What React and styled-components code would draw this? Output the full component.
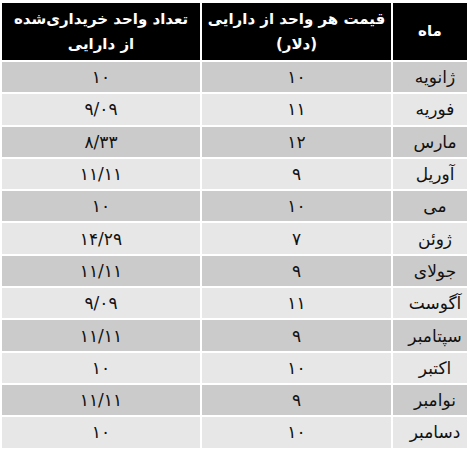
import React from "react";
import styled, { createGlobalStyle } from "styled-components";

const GlobalStyle = createGlobalStyle`
  html, body {
    margin: 0;
    padding: 0;
    background: #ffffff;
  }
  body {
    font-family: "DejaVu Sans", "Noto Sans", sans-serif;
  }
`;

const Page = styled.div`
  width: 470px;
  height: 460px;
  padding-top: 1px;
  box-sizing: border-box;
  background: #ffffff;
`;

const Table = styled.table`
  direction: rtl;
  border-collapse: separate;
  border-spacing: 2px;
  table-layout: fixed;
  width: 469px;
`;

const HeadCell = styled.th`
  background: #000000;
  color: #ffffff;
  font-weight: bold;
  font-size: 15px;
  line-height: 25px;
  height: 57px;
  padding: 0;
  text-align: center;
  vertical-align: middle;
  white-space: nowrap;
  width: ${(p) => p.$w}px;
  box-sizing: border-box;
`;

const Row = styled.tr`
  background: ${(p) => (p.$odd ? "#cbcbcb" : "#e7e7e7")};
`;

const Cell = styled.td`
  height: 30.3px;
  padding: 0;
  padding-left: ${(p) => (p.$month ? 10 : 0)}px;
  font-size: 17px;
  line-height: 20px;
  color: #111111;
  text-align: center;
  vertical-align: middle;
  white-space: nowrap;
  box-sizing: border-box;
`;

const rows = [
  ["ژانویه", "۱۰", "۱۰"],
  ["فوریه", "۱۱", "۹/۰۹"],
  ["مارس", "۱۲", "۸/۳۳"],
  ["آوریل", "۹", "۱۱/۱۱"],
  ["می", "۱۰", "۱۰"],
  ["ژوئن", "۷", "۱۴/۲۹"],
  ["جولای", "۹", "۱۱/۱۱"],
  ["آگوست", "۱۱", "۹/۰۹"],
  ["سپتامبر", "۹", "۱۱/۱۱"],
  ["اکتبر", "۱۰", "۱۰"],
  ["نوامبر", "۹", "۱۱/۱۱"],
  ["دسامبر", "۱۰", "۱۰"],
];

export default function App() {
  return (
    <>
      <GlobalStyle />
      <Page>
        <Table>
          <thead>
            <tr>
              <HeadCell $w={74}>ماه</HeadCell>
              <HeadCell $w={189}>
                قیمت هر واحد از دارایی
                <br />
                (دلار)
              </HeadCell>
              <HeadCell $w={198}>
                تعداد واحد خریداری‌شده
                <br />
                از دارایی
              </HeadCell>
            </tr>
          </thead>
          <tbody>
            {rows.map((r, i) => (
              <Row key={r[0]} $odd={i % 2 === 0}>
                <Cell $month>{r[0]}</Cell>
                <Cell>{r[1]}</Cell>
                <Cell>{r[2]}</Cell>
              </Row>
            ))}
          </tbody>
        </Table>
      </Page>
    </>
  );
}
